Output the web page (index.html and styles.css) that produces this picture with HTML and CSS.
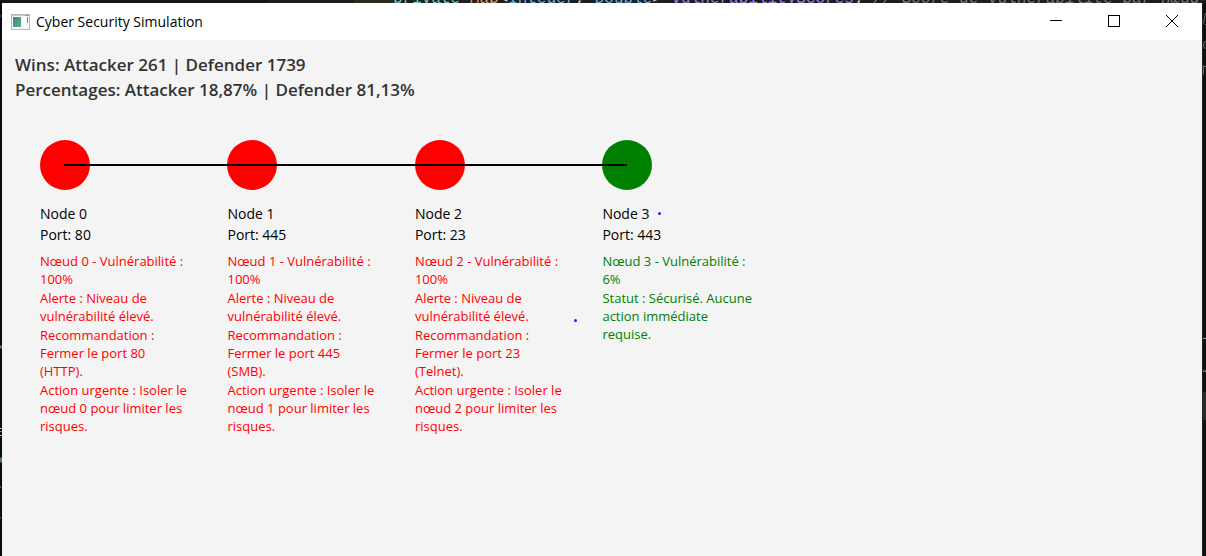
FILE: index.html
```html
<!DOCTYPE html>
<html lang="fr">
<head>
<meta charset="utf-8">
<title>Cyber Security Simulation</title>
<link rel="stylesheet" href="styles.css">
</head>
<body>
<div class="desktop">
  <div class="code-strip"><code><span class="kw">private</span> <span class="type">Map</span>&lt;<span class="cls">Integer</span>, <span class="cls">Double</span>&gt; <span class="field">vulnerabilityScores</span>; <i class="comment">// Score de vulnérabilité par nœud</i></code></div>
  <div class="left-edge">
    <svg width="2" height="553" aria-hidden="true"><path d="M0 13h1" stroke="#3b87b8"/><path d="M0 344h2" stroke="#667" stroke-width="3"/><path d="M0 425.500h2M0 432.500h2" stroke="#d9b46c"/><path d="M0 428.500h2" stroke="#d55"/><path d="M0 457h2" stroke="#4a7590" stroke-width="5"/><path d="M0 484h1" stroke="#92401f" stroke-width="2"/><path d="M0 515h1" stroke="#a87332"/></svg>
  </div>
  <main class="window">
    <header class="titlebar">
      <svg class="app-icon" width="19" height="16" viewBox="0 0 19 16" aria-hidden="true">
        <defs><linearGradient id="pane" x1="0" y1="0" x2="1" y2="1"><stop offset="0" stop-color="#447fa0"/><stop offset="1" stop-color="#55b77b"/></linearGradient></defs>
        <rect x=".5" y=".5" width="18" height="15" fill="#f6f7f8" stroke="#b4b8bc"/>
        <path d="M1 1.500h17" stroke="#c9ccd0"/>
        <path d="M14 1.500h4" stroke="#8e969f"/>
        <rect x="2" y="3" width="8" height="10" fill="url(#pane)"/>
        <rect x="11" y="3" width="4" height="10" fill="#fff"/>
        <rect x="16" y="3" width="1" height="6" fill="#5a9d94"/>
      </svg>
      <h1 class="title">Cyber Security Simulation</h1>
      <div class="controls">
        <button type="button" aria-label="Minimize"><svg width="12" height="12"><path d="M0 5.500h12" stroke="#000"/></svg></button>
        <button type="button" aria-label="Maximize"><svg width="12" height="12"><rect x=".5" y=".5" width="11" height="11" fill="none" stroke="#000"/></svg></button>
        <button type="button" aria-label="Close"><svg width="12" height="12"><path d="M0 0l12 12M12 0L0 12" stroke="#000"/></svg></button>
      </div>
    </header>
    <section class="stats">
      <p>Wins: Attacker 261 | Defender 1739</p>
      <p>Percentages: Attacker 18,87% | Defender 81,13%</p>
    </section>
    <section class="network">
      <article class="node danger">
        <div class="dot"></div>
        <div class="label"><p>Node 0</p><p>Port: 80</p></div>
        <div class="report"><p>Nœud 0 - Vulnérabilité :<br>100%</p><p>Alerte : Niveau de<br>vulnérabilité élevé.</p><p>Recommandation :<br>Fermer le port 80<br>(HTTP).</p><p>Action urgente : Isoler le<br>nœud 0 pour limiter les<br>risques.</p></div>
      </article>
      <article class="node danger">
        <div class="dot"></div>
        <div class="label"><p>Node 1</p><p>Port: 445</p></div>
        <div class="report"><p>Nœud 1 - Vulnérabilité :<br>100%</p><p>Alerte : Niveau de<br>vulnérabilité élevé.</p><p>Recommandation :<br>Fermer le port 445<br>(SMB).</p><p>Action urgente : Isoler le<br>nœud 1 pour limiter les<br>risques.</p></div>
      </article>
      <article class="node danger">
        <div class="dot"></div>
        <div class="label"><p>Node 2</p><p>Port: 23</p></div>
        <div class="report"><p>Nœud 2 - Vulnérabilité :<br>100%</p><p>Alerte : Niveau de<br>vulnérabilité élevé.</p><p>Recommandation :<br>Fermer le port 23<br>(Telnet).</p><p>Action urgente : Isoler le<br>nœud 2 pour limiter les<br>risques.</p></div>
      </article>
      <article class="node secure">
        <div class="dot"></div>
        <div class="label"><p>Node 3</p><p>Port: 443</p></div>
        <div class="report"><p>Nœud 3 - Vulnérabilité :<br>6%</p><p>Statut : Sécurisé. Aucune<br>action immédiate<br>requise.</p></div>
      </article>
      <span class="packet packet-a"></span>
      <span class="packet packet-b"></span>
    </section>
  </main>
  <div class="right-edge">
    <svg width="4" height="553" aria-hidden="true"><path d="M3.500 10L1.500 20.500M3 21.500h1" stroke="#686868" fill="none"/><path d="M4 38.500q-2.500 0-2.500 3.500t2.500 3.500M1.500 71.500v-9M2 63.500h2" stroke="#74706b" fill="none"/><path d="M1 335.500h3" stroke="#a295d8"/><path d="M1 369l1.500-2 1.500 2" stroke="#a39a94" fill="none"/><path d="M1 389h3v28H1z" fill="#292929"/></svg>
  </div>
</div>
</body>
</html>
```
FILE: styles.css
```css
* { box-sizing: border-box; }

body, p, h1 { margin: 0; }

body {
  background: #0b0b0b;
  font-family: "Open Sans", "Noto Sans", sans-serif;
  color: #000;
}

.desktop {
  display: grid;
  grid-template-columns: 2px 1fr 4px;
  grid-template-rows: 3px 1fr;
  height: 100vh;
  overflow: hidden;
}

.code-strip {
  grid-column: 1 / -1;
  display: flex;
  align-items: flex-end;
  padding-left: 393px;
  overflow: hidden;
  background: linear-gradient(90deg, #151515 268px, #1e1e1e 268px 354px, #272a1c 354px 393px, #1e1e1e 393px);
}

.code-strip code {
  flex: none;
  font: 16px/8px "Liberation Mono", monospace;
  white-space: pre;
  color: #d4d4d4;
}

.kw { color: #6fc7bd; }
.type { color: #e29b68; }
.cls { color: #69aee8; }
.field { color: #9585e6; }
.comment { color: #777; }

.left-edge, .right-edge { overflow: hidden; }
.right-edge { background: linear-gradient(90deg, #222 1px, #101010 1px); }
.left-edge svg, .right-edge svg { display: block; }

.window {
  min-width: 0;
  background: #f4f4f4;
}

.titlebar {
  display: flex;
  align-items: center;
  height: 37px;
  padding: 0 1px 0 9px;
  background: #fff;
}

.title {
  flex: 1;
  margin-left: 6px;
  font-size: 14px;
  font-weight: 400;
  line-height: 20px;
}

.controls {
  display: flex;
  align-self: flex-start;
}

.controls button {
  display: flex;
  align-items: center;
  justify-content: center;
  width: 58px;
  height: 36px;
  padding: 0;
  border: 0;
  background: none;
}

.stats {
  padding: 12px 13px;
  color: #333;
  font-size: 17px;
  font-weight: 600;
  line-height: 25px;
}

.network {
  position: relative;
  display: grid;
  grid-template-columns: repeat(4, 1fr);
  column-gap: 38px;
  max-width: 712px;
  margin: 26px 0 0 38px;
}

.node { position: relative; }

.dot {
  width: 50px;
  height: 50px;
  border-radius: 50%;
  background: currentColor;
}

.node:not(.secure)::after {
  content: "";
  position: absolute;
  z-index: 1;
  top: 24px;
  left: 24px;
  width: calc(100% + 39px);
  height: 2px;
  background: #000;
}

.danger { color: #f00; }
.secure { color: #008000; }

.label {
  margin-top: 13px;
  color: #000;
  font-size: 14px;
  line-height: 21px;
}

.report {
  display: grid;
  row-gap: 1px;
  margin-top: 7px;
  font-size: 13px;
  line-height: 18px;
  white-space: nowrap;
}

.packet {
  position: absolute;
  width: 3px;
  height: 3px;
  border-radius: 50%;
  background: #22f;
}

.packet-a { top: 72px; left: 618px; }
.packet-b { top: 179px; left: 534px; }
```
